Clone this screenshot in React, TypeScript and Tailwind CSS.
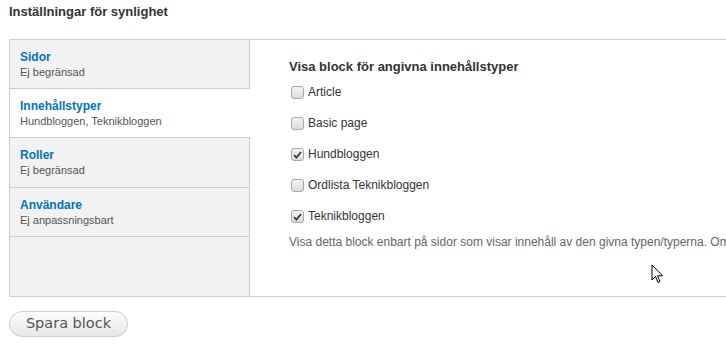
import React from "react";

const tabs = [
  { title: "Sidor", summary: "Ej begränsad", active: false },
  { title: "Innehållstyper", summary: "Hundbloggen, Teknikbloggen", active: true },
  { title: "Roller", summary: "Ej begränsad", active: false },
  { title: "Användare", summary: "Ej anpassningsbart", active: false },
];

const types = [
  { label: "Article", checked: false },
  { label: "Basic page", checked: false },
  { label: "Hundbloggen", checked: true },
  { label: "Ordlista Teknikbloggen", checked: false },
  { label: "Teknikbloggen", checked: true },
];

function Checkbox({ checked }: { checked: boolean }) {
  return (
    <span className="flex h-[13px] w-[13px] shrink-0 items-center justify-center rounded-[3px] border border-[#a9a9a9] bg-gradient-to-b from-[#f4f4f4] to-[#dcdcdc]">
      {checked && (
        <svg width="9" height="8" viewBox="0 0 9 8">
          <path d="M1 4.2 L3.4 6.6 L8 1" fill="none" stroke="#3a3a3a" strokeWidth="1.8" />
        </svg>
      )}
    </span>
  );
}

export default function App() {
  return (
    <div className="relative h-[348px] w-[726px] overflow-hidden bg-white font-['Liberation_Sans',Arial,sans-serif] text-[#333]">
      <h2 className="pl-[9px] pt-[4px] text-[13px] font-bold leading-[16px] text-[#333]">
        Inställningar för synlighet
      </h2>

      {/* vertical tabs */}
      <div className="ml-[9px] mt-[19px] flex h-[258px] w-[760px] border border-[#ccc]">
        <ul className="w-[240px] shrink-0 bg-[#f2f2f2]">
          {tabs.map((tab, i) => (
            <li
              key={tab.title}
              className={
                (i === 2 ? "h-[50px] " : "h-[49px] ") +
                (tab.active
                  ? "border-b border-[#ccc] bg-white pl-[10px] pt-[10px]"
                  : "border-b border-r border-[#ccc] pl-[10px] pt-[10px]")
              }
            >
              <div className="text-[12px] font-bold leading-[14px] text-[#0074bd]">{tab.title}</div>
              <div className="mt-[2px] text-[11px] leading-[13px] text-[#555]">{tab.summary}</div>
            </li>
          ))}
          <li className="h-[60px] border-r border-[#ccc]" />
        </ul>

        <div className="min-w-0 flex-1 pl-[39px] pt-[19px]">
          <div className="text-[13px] font-bold leading-[16px] text-[#333]">
            Visa block för angivna innehållstyper
          </div>
          <div className="mt-[11px] flex flex-col gap-[18px] pl-[2px]">
            {types.map((t) => (
              <label key={t.label} className="flex h-[13px] items-center gap-[4px] text-[12px] leading-[13px] text-[#333]">
                <Checkbox checked={t.checked} />
                <span>{t.label}</span>
              </label>
            ))}
          </div>
          <p className="mt-[12px] whitespace-nowrap text-[12px] leading-[14px] text-[#666]">
            Visa detta block enbart på sidor som visar innehåll av den givna typen/typerna. Om ingen typ väljs visas blocket på alla sidor.
          </p>
        </div>
      </div>

      <button className="ml-[9px] mt-[14px] flex h-[26px] w-[119px] items-center justify-center rounded-full border border-[#ccc] bg-gradient-to-b from-[#fdfdfd] to-[#e6e6e6] font-['DejaVu_Sans',sans-serif] text-[14.5px] text-[#555]">
        Spara block
      </button>

      {/* mouse pointer */}
      <svg className="absolute left-[651px] top-[264px]" width="14" height="21" viewBox="0 0 14 21">
        <path d="M1 1 L1 16 L4.5 12.5 L7 18.5 L9 17.6 L6.6 11.8 L11.5 11.8 Z" fill="#fff" stroke="#000" strokeWidth="1" strokeLinejoin="round" />
      </svg>
    </div>
  );
}
